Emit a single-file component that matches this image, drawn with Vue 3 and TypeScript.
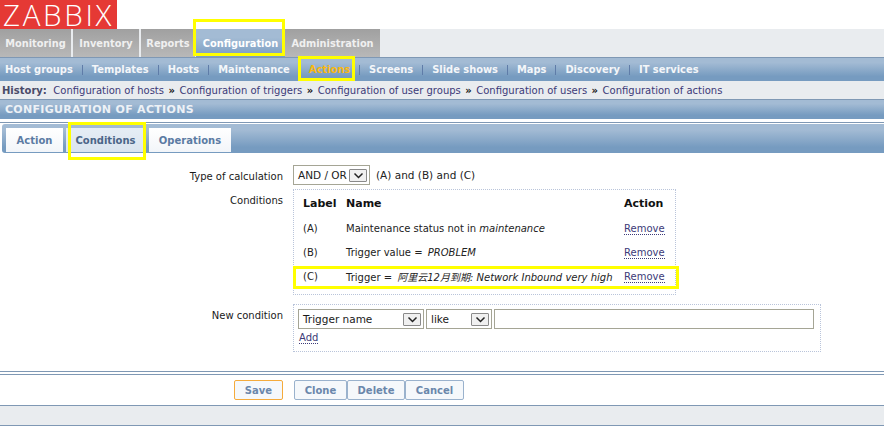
<template>
<div class="page">
  <div class="logo-row">
    <div class="logo">ZABBIX</div>
  </div>

  <nav class="main-nav">
    <a
      v-for="item in mainMenu"
      :key="item"
      :class="['main-tab', item === 'Configuration' ? 'selected' : '']"
    >{{ item }}</a>
  </nav>

  <nav class="sub-nav">
    <template v-for="(item, i) in subMenu" :key="item">
      <span v-if="i > 0" class="sep"></span>
      <a :class="['sub-item', item === 'Actions' ? 'current' : '']">{{ item }}</a>
    </template>
  </nav>

  <div class="history">
    <b>History:</b>
    <template v-for="(item, i) in history" :key="item">
      <span v-if="i > 0" class="arrow">»</span>
      <a>{{ item }}</a>
    </template>
  </div>

  <div class="title-bar">CONFIGURATION OF ACTIONS</div>
  <div class="rule"></div>

  <div class="tab-bar">
    <a
      v-for="tab in tabs"
      :key="tab"
      :class="['form-tab', tab === 'Conditions' ? 'active' : '']"
    >{{ tab }}</a>
  </div>

  <form class="form" @submit.prevent>
    <div class="form-row calc-row">
      <label>Type of calculation</label>
      <div class="calc">
        <div class="select calc-select">
          <span>AND / OR</span>
          <span class="arrow-btn"><svg width="11" height="7" viewBox="0 0 11 7"><path d="M1.5 1.5 5.5 5.5 9.5 1.5" fill="none" stroke="#222" stroke-width="1.5" /></svg></span>
        </div>
        <span>(A) and (B) and (C)</span>
      </div>
    </div>

    <div class="form-row cond-row">
      <label>Conditions</label>
      <div class="box cond-box">
        <div class="cond-line head">
          <span class="c-label">Label</span>
          <span class="c-name">Name</span>
          <span class="c-action">Action</span>
        </div>
        <div v-for="row in conditions" :key="row.label" class="cond-line">
          <span class="c-label">{{ row.label }}</span>
          <span class="c-name">{{ row.text }} <i :class="{ wide: row.text.endsWith('=') }">{{ row.value }}</i></span>
          <span class="c-action"><a class="dotted">Remove</a></span>
        </div>
      </div>
    </div>

    <div class="form-row new-row">
      <label>New condition</label>
      <div class="box new-box">
        <div class="new-line">
          <div class="select name-select">
            <span>Trigger name</span>
            <span class="arrow-btn"><svg width="11" height="7" viewBox="0 0 11 7"><path d="M1.5 1.5 5.5 5.5 9.5 1.5" fill="none" stroke="#222" stroke-width="1.5" /></svg></span>
          </div>
          <div class="select like-select">
            <span>like</span>
            <span class="arrow-btn"><svg width="11" height="7" viewBox="0 0 11 7"><path d="M1.5 1.5 5.5 5.5 9.5 1.5" fill="none" stroke="#222" stroke-width="1.5" /></svg></span>
          </div>
          <input class="text-input" type="text" />
        </div>
        <a class="dotted add">Add</a>
      </div>
    </div>

    <div class="footer-rule"></div>
    <div class="buttons">
      <button class="btn save">Save</button>
      <div class="btn-group">
        <button class="btn">Clone</button>
        <button class="btn">Delete</button>
        <button class="btn">Cancel</button>
      </div>
    </div>
    <div class="footer-strip"></div>
  </form>

  <!-- yellow annotations drawn over the screenshot -->
  <div class="mark mark-config"></div>
  <div class="mark mark-actions"></div>
  <div class="mark mark-conditions"></div>
  <div class="mark mark-row"></div>
</div>
</template>
<script setup lang="ts">
const mainMenu: string[] = ['Monitoring', 'Inventory', 'Reports', 'Configuration', 'Administration'];
const subMenu: string[] = ['Host groups', 'Templates', 'Hosts', 'Maintenance', 'Actions', 'Screens', 'Slide shows', 'Maps', 'Discovery', 'IT services'];
const history: string[] = [
  'Configuration of hosts',
  'Configuration of triggers',
  'Configuration of user groups',
  'Configuration of users',
  'Configuration of actions',
];
const tabs: string[] = ['Action', 'Conditions', 'Operations'];

interface Condition {
  label: string;
  text: string;
  value: string;
}
const conditions: Condition[] = [
  { label: '(A)', text: 'Maintenance status not in', value: 'maintenance' },
  { label: '(B)', text: 'Trigger value =', value: 'PROBLEM' },
  { label: '(C)', text: 'Trigger =', value: '阿里云12月到期: Network Inbound very high' },
];
</script>
<style>
html, body {
  background: #fff;
}
</style>
<style scoped>
.page {
  position: relative;
  width: 884px;
  height: 427px;
  overflow: hidden;
  background: #fff;
  font-family: "DejaVu Sans", Verdana, "Noto Sans CJK SC", sans-serif;
  font-size: 10px;
  color: #1a1a1a;
}
.logo-row {
  height: 29px;
}
.logo {
  display: flex;
  align-items: center;
  width: 117px;
  height: 29px;
  background: #e53935;
  color: #fff;
  font-family: "Open Sans", sans-serif;
  font-size: 29.5px;
  font-weight: 300;
  line-height: 29px;
  letter-spacing: 2.7px;
  padding-left: 3px;
  box-sizing: border-box;
}
.main-nav {
  display: flex;
  height: 28px;
  background: #e9ecef;
}
.main-tab {
  display: flex;
  align-items: center;
  justify-content: center;
  height: 28px;
  margin-right: 1px;
  background: linear-gradient(#a0a0a0, #b8b8b8);
  color: #f0f0f0;
  font-weight: 700;
  font-size: 9.8px;
  box-sizing: border-box;
}
.main-tab:nth-child(1) { width: 71px; margin-right: 2px; }
.main-tab:nth-child(2) { width: 66px; margin-right: 2px; }
.main-tab:nth-child(3) { width: 54px; margin-right: 1px; }
.main-tab:nth-child(4) { width: 89px; margin-right: 0; }
.main-tab:nth-child(5) { width: 95px; margin-right: 0; }
.main-tab.selected {
  background: linear-gradient(#a3bbd4 30%, #7a9dc2);
  color: #fff;
}
.sub-nav {
  display: flex;
  align-items: center;
  height: 24px;
  box-sizing: border-box;
  border-top: 1px solid #7f98b4;
  background: linear-gradient(#a3bbd4 20%, #769bc0 80%);
  padding-left: 5px;
}
.sub-item {
  color: #f4f6f9;
  font-weight: 700;
  font-size: 9.9px;
  white-space: nowrap;
}
.sub-item.current {
  color: #f9b80e;
}
.sep {
  width: 1px;
  height: 10px;
  margin: 0 9px;
  background: #5f7ca8;
}
.history {
  display: flex;
  align-items: center;
  gap: 4.5px;
  height: 18px;
  background: #e9ecef;
  font-size: 10px;
  padding-left: 2px;
  color: #3c3a78;
  white-space: nowrap;
}
.history b {
  color: #4a4a68;
  margin-right: 2px;
}
.arrow {
  color: #111;
  font-weight: 700;
}
.title-bar {
  height: 20px;
  line-height: 20px;
  box-sizing: border-box;
  border-top: 1px solid #7f98b4;
  background: linear-gradient(#a3bbd4 20%, #769bc0 80%);
  color: #edf1f6;
  font-weight: 700;
  font-size: 11px;
  letter-spacing: 0.3px;
  padding-left: 5px;
}
.rule {
  height: 1px;
  margin-top: 3px;
  background: #7f98b4;
}
.tab-bar {
  display: flex;
  align-items: flex-end;
  height: 29px;
  margin-top: 1px;
  margin-left: 2px;
  padding-left: 4px;
  box-sizing: border-box;
  border-radius: 3px 0 0 3px;
  background: linear-gradient(#a3bbd4 20%, #769bc0 80%);
}
.form-tab {
  display: flex;
  align-items: center;
  justify-content: center;
  height: 24px;
  box-sizing: border-box;
  background: linear-gradient(#fff, #f2f5f9);
  color: #5b7ba3;
  font-weight: 700;
  font-size: 10px;
  margin-bottom: 1px;
}
.form-tab:nth-child(1) { width: 57px; margin-right: 3px; }
.form-tab:nth-child(2) { width: 79px; margin-right: 4px; }
.form-tab:nth-child(3) { width: 82px; }
.form-tab.active {
  background: linear-gradient(#e5edf5, #dae4ef);
  color: #4a6588;
}
.form {
  display: block;
}
.form-row {
  display: grid;
  grid-template-columns: 283px auto;
  column-gap: 10px;
  justify-content: start;
}
.form-row label {
  text-align: right;
  font-size: 10px;
  color: #1a1a1a;
}
.calc-row {
  margin-top: 12px;
  height: 24px;
}
.calc-row label {
  padding-top: 6px;
}
.calc {
  display: flex;
  align-items: center;
  gap: 6px;
  height: 20px;
  font-size: 10.5px;
  color: #222;
}
.select {
  display: flex;
  align-items: center;
  justify-content: space-between;
  height: 20px;
  box-sizing: border-box;
  border: 1px solid #a5a595;
  background: #fff;
  padding: 0 2px 0 4px;
  font-size: 10.5px;
}
.calc-select { width: 77px; }
.name-select { width: 126px; }
.like-select { width: 66px; }
.arrow-btn {
  display: flex;
  align-items: center;
  justify-content: center;
  width: 16px;
  height: 11px;
  background: #f0f0f0;
  border: 1px solid #8a8a8a;
  box-sizing: content-box;
  border-radius: 1px;
}
.box {
  box-sizing: border-box;
  border: 1px dotted #b9c4da;
}
.cond-row {
  height: 107px;
}
.cond-row label {
  padding-top: 6px;
}
.cond-box {
  width: 383px;
  height: 106px;
  padding: 4px 0 0 9px;
}
.cond-line {
  display: flex;
  align-items: center;
  height: 24px;
  color: #222;
}
.cond-line.head {
  height: 18px;
  font-weight: 700;
  font-size: 11px;
  color: #111;
  margin-bottom: 4px;
}
.c-label {
  width: 43px;
}
.c-name {
  width: 278px;
  white-space: nowrap;
}
.c-name i.wide {
  margin-left: 2px;
}
.c-action {
  white-space: nowrap;
}
.dotted {
  color: #3c3a78;
  border-bottom: 1px dotted #3c3a78;
}
.new-row {
  margin-top: 8px;
  height: 49px;
}
.new-row label {
  padding-top: 6px;
}
.new-box {
  width: 528px;
  height: 48px;
  padding: 4px 0 0 4px;
}
.new-line {
  display: flex;
  gap: 2px;
  margin-bottom: 3px;
}
.text-input {
  width: 320px;
  height: 20px;
  box-sizing: border-box;
  border: 1px solid #a5a595;
  background: #fff;
  padding: 0;
}
.add {
  margin-left: 1px;
}
.footer-rule {
  margin-top: 18px;
  height: 4px;
  box-sizing: border-box;
  border-top: 1px solid #7f98b4;
  border-bottom: 1px solid #7f98b4;
}
.buttons {
  display: flex;
  gap: 11px;
  align-items: center;
  height: 30px;
  padding-left: 234px;
}
.btn {
  height: 20px;
  padding: 0;
  border: 1px solid #9ab2cd;
  border-radius: 2px;
  background: #f5f8fb;
  color: #6a87ab;
  font: 700 10px "DejaVu Sans", Verdana, sans-serif;
}
.btn.save {
  width: 49px;
  border-color: #f5ab3c;
}
.btn-group {
  display: flex;
}
.btn-group .btn:nth-child(1) { width: 53px; }
.btn-group .btn:nth-child(2) { width: 58px; }
.btn-group .btn:nth-child(3) { width: 59px; }
.footer-strip {
  height: 21px;
  box-sizing: border-box;
  background: #e9ecef;
  border-top: 1px solid #7f98b4;
  border-bottom: 1px solid #7f98b4;
}
.mark {
  position: absolute;
  box-sizing: border-box;
  border: 3px solid #ffff00;
  pointer-events: none;
}
.mark-config { left: 193px; top: 19px; width: 92px; height: 37px; }
.mark-actions { left: 298px; top: 56px; width: 57px; height: 25px; }
.mark-conditions { left: 68px; top: 122px; width: 78px; height: 38px; }
.mark-row { left: 293px; top: 266px; width: 386px; height: 23px; }
</style>
